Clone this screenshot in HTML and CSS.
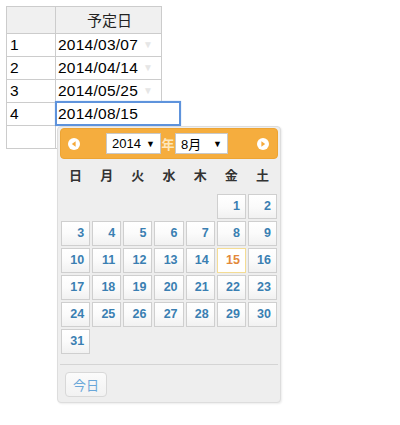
FILE: index.html
```html
<!DOCTYPE html>
<html lang="ja">
<head>
<meta charset="utf-8">
<link rel="stylesheet" href="styles.css">
</head>
<body>
<div class="sheet">
  <div class="row head"><div class="c rh"></div><div class="c dc hc">予定日</div></div>
  <div class="row"><div class="c rh">1</div><div class="c dc"><span>2014/03/07</span><span class="arrow">▼</span></div></div>
  <div class="row"><div class="c rh">2</div><div class="c dc"><span>2014/04/14</span><span class="arrow">▼</span></div></div>
  <div class="row"><div class="c rh">3</div><div class="c dc"><span>2014/05/25</span><span class="arrow">▼</span></div></div>
  <div class="row"><div class="c rh">4</div><div class="c dc"><span>2014/08/15</span></div></div>
  <div class="row"><div class="c rh"></div><div class="c dc"></div></div>
</div>

<div class="editor">2014/08/15</div>

<div class="picker">
  <div class="ph">
    <svg class="nav prev" width="12" height="12" viewBox="0 0 12 12"><circle cx="6" cy="6" r="6" fill="#fff"/><polygon points="7.6,3.2 7.6,8.8 3.8,6" fill="#f5a93a"/></svg>
    <div class="sel ysel"><span>2014</span><span class="dd">▼</span></div>
    <span class="nen">年</span>
    <div class="sel msel"><span>8月</span><span class="dd">▼</span></div>
    <svg class="nav next" width="12" height="12" viewBox="0 0 12 12"><circle cx="6" cy="6" r="6" fill="#fff"/><polygon points="4.4,3.2 4.4,8.8 8.2,6" fill="#f5a93a"/></svg>
  </div>
  <div class="dow">
    <span>日</span><span>月</span><span>火</span><span>水</span><span>木</span><span>金</span><span>土</span>
  </div>
  <div class="days">
    <span></span><span></span><span></span><span></span><span></span>
    <a class="d">1</a><a class="d">2</a>
    <a class="d">3</a><a class="d">4</a><a class="d">5</a><a class="d">6</a><a class="d">7</a><a class="d">8</a><a class="d">9</a>
    <a class="d">10</a><a class="d">11</a><a class="d">12</a><a class="d">13</a><a class="d">14</a><a class="d today">15</a><a class="d">16</a>
    <a class="d">17</a><a class="d">18</a><a class="d">19</a><a class="d">20</a><a class="d">21</a><a class="d">22</a><a class="d">23</a>
    <a class="d">24</a><a class="d">25</a><a class="d">26</a><a class="d">27</a><a class="d">28</a><a class="d">29</a><a class="d">30</a>
    <a class="d">31</a>
  </div>
  <div class="pane">
    <button class="btn">今日</button>
  </div>
</div>
</body>
</html>
```

FILE: styles.css
```css
html, body {
  margin: 0;
  padding: 0;
  background: #fff;
}
body {
  padding: 6px;
  font-family: "Liberation Sans", Arial, "Noto Sans CJK JP", sans-serif;
  color: #000;
}
.sheet {
  display: inline-flex;
  flex-direction: column;
  border-left: 1px solid #cccccc;
  border-top: 1px solid #cccccc;
}
.row {
  display: grid;
  grid-template-columns: 49px 106px;
  height: 23px;
}
.row.head {
  height: 27px;
}
.c {
  border-right: 1px solid #cccccc;
  border-bottom: 1px solid #cccccc;
  font-size: 15.5px;
  letter-spacing: 0.25px;
  line-height: 22px;
  white-space: nowrap;
  overflow: hidden;
}
.rh {
  padding-left: 3px;
}
.dc {
  padding-left: 2px;
  display: flex;
  align-items: center;
}
.head .c {
  background: #f0f0f0;
  line-height: 26px;
}
.hc {
  justify-content: center;
  font-family: "Noto Sans CJK JP", sans-serif;
  font-size: 15px;
  letter-spacing: 0;
  color: #222;
}
.arrow {
  margin-left: auto;
  margin-right: 8px;
  font-size: 10px;
  letter-spacing: 0;
  color: #e6e6e6;
}
.editor {
  position: absolute;
  left: 55px;
  top: 101px;
  width: 121px;
  height: 21px;
  border: 2px solid #5e93dc;
  background: #fff;
  font-size: 15.5px;
  letter-spacing: 0.25px;
  line-height: 21px;
  padding-left: 1px;
  box-shadow: 0 0 1px #9bbdee;
}
.picker {
  position: absolute;
  left: 57px;
  top: 126px;
  width: 218px;
  padding: 1px 2px 5px 2px;
  background: #eeeeee;
  border: 1px solid #dddddd;
  border-radius: 4px;
  box-shadow: 1px 1px 2px rgba(0,0,0,0.08);
}
.ph {
  height: 29px;
  background: #f5ad3e;
  border: 1px solid #eda433;
  border-radius: 4px;
  display: flex;
  align-items: center;
}
.nav.prev {
  margin-left: 7px;
}
.nav.next {
  margin-left: 29px;
}
.sel {
  height: 19px;
  background: #fff;
  border: 1px solid #c8c8c8;
  display: flex;
  align-items: center;
  justify-content: space-between;
  padding: 0 5px;
  box-sizing: content-box;
  font-size: 13px;
  font-family: "Liberation Sans", "Noto Sans CJK JP", sans-serif;
}
.ysel {
  margin-left: 26px;
  width: 43px;
}
.msel {
  width: 41px;
}
.dd {
  font-size: 9px;
}
.nen {
  width: 14px;
  text-align: center;
  font-family: "Noto Sans CJK JP", sans-serif;
  font-weight: bold;
  font-size: 13px;
  color: #fde7bd;
}
.dow {
  display: grid;
  grid-template-columns: repeat(7, 1fr);
  column-gap: 2px;
  padding: 0 1px;
  height: 22px;
  margin: 5px 0 8px;
  line-height: 22px;
  text-align: center;
  font-family: "Noto Sans CJK JP", sans-serif;
  font-weight: bold;
  font-size: 13px;
  color: #333;
}
.days {
  display: grid;
  grid-template-columns: repeat(7, 1fr);
  grid-auto-rows: 25px;
  gap: 2px;
  padding: 0 1px;
}
.d {
  display: block;
  box-sizing: border-box;
  border: 1px solid #cfcfcf;
  background: linear-gradient(#ffffff 0%, #fbfbfb 50%, #f1f1f1 100%);
  text-align: right;
  padding-right: 5px;
  font-size: 12.5px;
  font-weight: bold;
  line-height: 23px;
  color: #3a7fb2;
}
.d.today {
  border-color: #f4dc94;
  background: #fff;
  color: #e3893a;
}
.pane {
  margin-top: 10px;
  border-top: 1px solid #d4d4d4;
  padding-top: 7px;
}
.btn {
  display: block;
  margin-left: 5px;
  width: 42px;
  height: 25px;
  padding: 0;
  border: 1px solid #d8d8d8;
  border-radius: 4px;
  background: linear-gradient(#fbfbfb, #f2f2f2);
  font-family: "Noto Sans CJK JP", sans-serif;
  font-size: 13px;
  color: #6aa7d9;
}
```
